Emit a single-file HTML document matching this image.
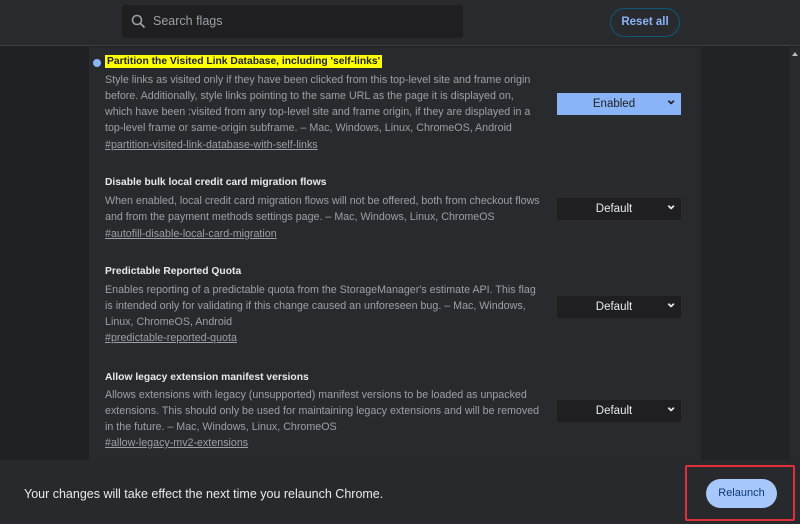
<!DOCTYPE html>
<html><head><meta charset="utf-8"><style>
*{box-sizing:border-box;margin:0;padding:0}
body{width:800px;height:524px;overflow:hidden;background:#202124;font-family:"Liberation Sans",sans-serif;position:relative}
.hdr{position:absolute;left:0;top:0;width:800px;height:46px;background:#292a2d;border-bottom:1px solid #3c3d40}
.search{position:absolute;left:122px;top:5px;width:341px;height:33px;background:#1f1f21;border-radius:3px;color:#9aa0a6;font-size:12.5px;line-height:33px;padding-left:31px}
.reset{position:absolute;left:610px;top:8px;width:70px;height:29px;border:1.5px solid #0e5978;border-radius:15px;color:#8ab4f8;font-weight:bold;font-size:11.5px;text-align:center;line-height:26px}
.panel{position:absolute;left:89px;top:47px;width:612px;height:413px;background:#292a2d}
.right{position:absolute;left:701px;top:47px;width:89px;height:413px;background:#222326}
.sb{position:absolute;left:790px;top:47px;width:10px;height:413px;background:#292a2d}
.t{position:absolute;left:105px;color:#e8eaed;font-weight:bold;font-size:10.3px}
.d{position:absolute;left:105px;width:440px;color:#9aa0a6;font-size:10.7px;line-height:16px}
.l{position:absolute;left:105px;color:#9aa0a6;font-size:10.7px;text-decoration:underline}
.sel{position:absolute;left:557px;width:124px;height:22px;background:#1f1f21;color:#e8eaed;font-size:11.5px;text-align:center;line-height:22px;padding-right:10px}
.sel:after{content:"⌄";position:absolute;right:4px;top:-5px;font-size:14px;font-weight:bold}
.bar{position:absolute;left:0;top:460px;width:800px;height:64px;background:#28292c}
</style></head><body>
<div class="hdr">
<div class="search"><svg style="position:absolute;left:9px;top:9px" width="15" height="15" viewBox="0 0 15 15"><circle cx="6" cy="6" r="4.5" fill="none" stroke="#9aa0a6" stroke-width="1.6"/><path d="M9.3 9.3L13.5 13.5" stroke="#9aa0a6" stroke-width="1.8"/></svg>Search flags</div>
<div class="reset">Reset all</div>
</div>
<div class="panel"></div><div class="right"></div><div class="sb"><div style="position:absolute;left:2px;top:5px;border:3.5px solid transparent;border-bottom:4px solid #bbb;border-top:0"></div></div>
<div style="position:absolute;left:93px;top:59px;width:8px;height:8px;border-radius:50%;background:#8ab4f8"></div>
<div class="t" style="top:55px;left:105px;background:#ffff00;color:#202124;padding:1px 2px">Partition the Visited Link Database, including 'self-links'</div>
<div class="d" style="top:72px;width:432px">Style links as visited only if they have been clicked from this top-level site and frame origin before. Additionally, style links pointing to the same URL as the page it is displayed on, which have been :visited from any top-level site and frame origin, if they are displayed in a top-level frame or same-origin subframe. – Mac, Windows, Linux, ChromeOS, Android</div>
<div class="l" style="top:139px">#partition-visited-link-database-with-self-links</div>
<div class="sel" style="top:93px;background:#8ab4f8;color:#202124">Enabled</div>

<div class="t" style="top:177px">Disable bulk local credit card migration flows</div>
<div class="d" style="top:193px">When enabled, local credit card migration flows will not be offered, both from checkout flows and from the payment methods settings page. – Mac, Windows, Linux, ChromeOS</div>
<div class="l" style="top:228px">#autofill-disable-local-card-migration</div>
<div class="sel" style="top:198px">Default</div>

<div class="t" style="top:266px">Predictable Reported Quota</div>
<div class="d" style="top:282px">Enables reporting of a predictable quota from the StorageManager's estimate API. This flag is intended only for validating if this change caused an unforeseen bug. – Mac, Windows, Linux, ChromeOS, Android</div>
<div class="l" style="top:332px">#predictable-reported-quota</div>
<div class="sel" style="top:296px">Default</div>

<div class="t" style="top:372px">Allow legacy extension manifest versions</div>
<div class="d" style="top:387px">Allows extensions with legacy (unsupported) manifest versions to be loaded as unpacked extensions. This should only be used for maintaining legacy extensions and will be removed in the future. – Mac, Windows, Linux, ChromeOS</div>
<div class="l" style="top:437px">#allow-legacy-mv2-extensions</div>
<div class="sel" style="top:400px">Default</div>

<div class="bar">
<div style="position:absolute;left:24px;top:27px;color:#e8eaed;font-size:12.5px">Your changes will take effect the next time you relaunch Chrome.</div>
<div style="position:absolute;left:685px;top:5px;width:110px;height:56px;border:2px solid #e0303a;border-radius:2px"></div>
<div style="position:absolute;left:706px;top:19px;width:71px;height:29px;border-radius:15px;background:#a8c7fa;color:#0b3a78;font-size:11px;text-align:center;line-height:29px">Relaunch</div>
</div>
</body></html>
